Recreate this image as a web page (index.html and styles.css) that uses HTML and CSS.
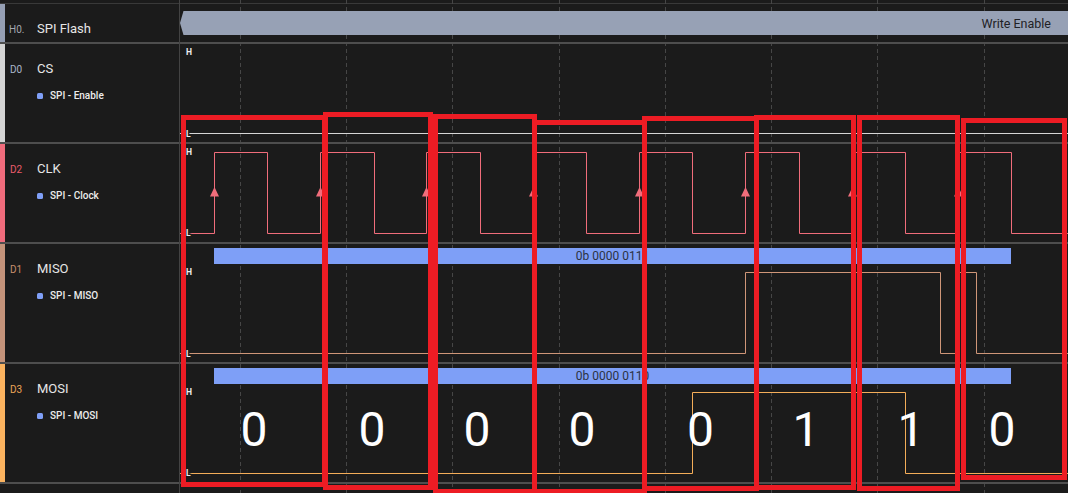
FILE: index.html
```html
<!DOCTYPE html>
<html lang="en">
<head>
<meta charset="utf-8">
<title>SPI capture</title>
<link rel="stylesheet" href="styles.css">
</head>
<body>
<div class="app">
  <aside class="labels">
    <div class="top-gap"></div>
    <div class="row row-h0">
      <span class="strip"></span>
      <div class="info">
        <div class="title"><span class="cid">H0.</span><span class="cname">SPI Flash</span></div>
      </div>
    </div>
    <div class="row row-d0">
      <span class="strip"></span>
      <div class="info">
        <div class="title"><span class="cid">D0</span><span class="cname">CS</span></div>
        <div class="sub"><span class="dot"></span><span>SPI - Enable</span></div>
      </div>
    </div>
    <div class="row row-d2">
      <span class="strip"></span>
      <div class="info">
        <div class="title"><span class="cid">D2</span><span class="cname">CLK</span></div>
        <div class="sub"><span class="dot"></span><span>SPI - Clock</span></div>
      </div>
    </div>
    <div class="row row-d1 row-tall">
      <span class="strip"></span>
      <div class="info">
        <div class="title"><span class="cid">D1</span><span class="cname">MISO</span></div>
        <div class="sub"><span class="dot"></span><span>SPI - MISO</span></div>
      </div>
    </div>
    <div class="row row-d3 row-tall">
      <span class="strip"></span>
      <div class="info">
        <div class="title"><span class="cid">D3</span><span class="cname">MOSI</span></div>
        <div class="sub"><span class="dot"></span><span>SPI - MOSI</span></div>
      </div>
    </div>
  </aside>
  <main class="canvas">
    <svg class="wave" width="888" height="493" viewBox="180 0 888 493" xmlns="http://www.w3.org/2000/svg">
      <rect class="topline" x="180" y="3" width="888" height="1"/>
      <g class="grid">
        <line x1="240.5" y1="0" x2="240.5" y2="493"/>
        <line x1="346.5" y1="0" x2="346.5" y2="493"/>
        <line x1="452.5" y1="0" x2="452.5" y2="493"/>
        <line x1="559.5" y1="0" x2="559.5" y2="493"/>
        <line x1="665.5" y1="0" x2="665.5" y2="493"/>
        <line x1="771.5" y1="0" x2="771.5" y2="493"/>
        <line x1="877.5" y1="0" x2="877.5" y2="493"/>
        <line x1="984.5" y1="0" x2="984.5" y2="493"/>
      </g>
      <g class="sep">
        <rect x="180" y="42" width="888" height="2"/>
        <rect x="180" y="142" width="888" height="2"/>
        <rect x="180" y="242" width="888" height="2"/>
        <rect x="180" y="362" width="888" height="2"/>
        <rect x="180" y="482" width="888" height="2"/>
      </g>

      <path class="hbar" d="M180 23 L183.5 11 H1068 V35 H183.5 Z"/>
      <text class="hbar-text" x="1051" y="27.5">Write Enable</text>

      <rect class="dbar" x="214" y="248" width="797" height="16"/>
      <text class="dbar-text" x="612.5" y="260">0b 0000 0111</text>
      <rect class="dbar" x="214" y="368" width="797" height="16"/>
      <text class="dbar-text" x="612.5" y="380">0b 0000 0110</text>

      <path class="sig sig-cs" d="M180 133.5 H1068"/>
      <path class="sig sig-clk" d="M180 233.5 H214.5 V152.5 H267.5 V233.5 H320.5 V152.5 H374.5 V233.5 H426.5 V152.5 H480.5 V233.5 H533.5 V152.5 H586.5 V233.5 H639.5 V152.5 H692.5 V233.5 H745.5 V152.5 H799.5 V233.5 H852.5 V152.5 H905.5 V233.5 H958.5 V152.5 H1011.5 V233.5 H1068"/>
      <g class="edge">
        <polygon points="214.5,187 210,196.5 219,196.5"/>
        <polygon points="320.5,187 316,196.5 325,196.5"/>
        <polygon points="426.5,187 422,196.5 431,196.5"/>
        <polygon points="533.5,187 529,196.5 538,196.5"/>
        <polygon points="639.5,187 635,196.5 644,196.5"/>
        <polygon points="745.5,187 741,196.5 750,196.5"/>
        <polygon points="852.5,187 848,196.5 857,196.5"/>
        <polygon points="958.5,187 954,196.5 963,196.5"/>
      </g>
      <path class="sig sig-miso" d="M180 353.5 H745.5 V272.5 H940.5 V353.5 H958.5 V272.5 H976.5 V353.5 H1068"/>
      <path class="sig sig-mosi" d="M180 473.5 H692.5 V392.5 H905.5 V473.5 H1068"/>

      <g class="lvl">
        <text x="186" y="54.7">H</text>
        <text x="186" y="136.7">L</text>
        <text x="186" y="155">H</text>
        <text x="186" y="236.3">L</text>
        <text x="186" y="275">H</text>
        <text x="186" y="356.7">L</text>
        <text x="186" y="394.7">H</text>
        <text x="186" y="476.3">L</text>
      </g>

      <g class="bit">
        <text x="254" y="446">0</text>
        <text x="372" y="446">0</text>
        <text x="477" y="446">0</text>
        <text x="582" y="446">0</text>
        <text x="700.5" y="446">0</text>
        <text x="806" y="446">1</text>
        <text x="911" y="446">1</text>
        <text x="1002" y="446">0</text>
      </g>

      <g class="mark">
        <rect x="183.5" y="117.5" width="141" height="367"/>
        <rect x="325.5" y="114.5" width="105" height="373"/>
        <rect x="435.5" y="116.5" width="99" height="375"/>
        <rect x="534.5" y="122.5" width="110" height="369"/>
        <rect x="644.5" y="118.5" width="112" height="370"/>
        <rect x="756.5" y="117.5" width="97" height="370"/>
        <rect x="859.5" y="117.5" width="98" height="371"/>
        <rect x="963.5" y="120.5" width="101" height="357"/>
      </g>
    </svg>
  </main>
</div>
</body>
</html>
```

FILE: styles.css
```css
html, body {
  margin: 0;
  padding: 0;
  background: #1b1b1b;
  overflow: hidden;
}

body {
  width: 1068px;
  height: 493px;
  font-family: Roboto, "Liberation Sans", sans-serif;
}

.app {
  display: flex;
  height: 493px;
}

.labels {
  width: 179px;
  flex: none;
  border-right: 1px solid #434343;
  display: flex;
  flex-direction: column;
}

.top-gap {
  height: 3px;
  border-bottom: 1px solid #393939;
}

.row {
  display: flex;
  height: 38px;
  border-bottom: 2px solid #4e4e4e;
}

.row-d0, .row-d2 {
  height: 98px;
}

.row-tall {
  height: 118px;
}

.strip {
  width: 5px;
  flex: none;
}

.row-h0 .strip { background: #959fb4; }
.row-d0 .strip { background: #d4d4d4; }
.row-d2 .strip { background: #f06c7c; }
.row-d1 .strip { background: #c4937a; }
.row-d3 .strip { background: #fbb35f; }

.info {
  padding: 17px 0 0 5px;
  display: flex;
  flex-direction: column;
}

.title {
  display: flex;
  align-items: baseline;
  line-height: 16px;
}

.cid {
  width: 27px;
  font-size: 10px;
  color: #aab6c9;
}

.row-h0 .cid { color: #a2a6ae; width: 28px; margin-left: -1px; }
.row-d2 .cid { color: #ea5c6c; }
.row-d1 .cid { color: #c98f6d; }
.row-d3 .cid { color: #eba557; }

.cname {
  font-size: 13px;
  color: #e6e6e6;
}

.sub {
  display: flex;
  align-items: center;
  gap: 7px;
  margin: 12px 0 0 27px;
  font-size: 10px;
  line-height: 12px;
  font-weight: 500;
  color: #ececec;
}

.dot {
  width: 6px;
  height: 6px;
  border-radius: 1.5px;
  background: #7f9ff7;
}

.canvas {
  flex: 1;
}

.wave {
  display: block;
}

.topline { fill: #393939; }

.grid line {
  stroke: #464646;
  stroke-width: 1;
  stroke-dasharray: 4 3;
}

.sep rect { fill: #4e4e4e; }

.hbar { fill: #97a1b5; }

.hbar-text {
  font-size: 12.5px;
  fill: #1f2126;
  text-anchor: end;
}

.dbar { fill: #7e9ff7; }

.dbar-text {
  font-size: 12px;
  fill: #2b3245;
  text-anchor: middle;
}

.sig {
  fill: none;
  stroke-width: 1;
}

.sig-cs { stroke: #d6d6d6; }
.sig-clk { stroke: #f06d7b; }
.sig-miso { stroke: #cf9678; }
.sig-mosi { stroke: #f4ad59; }

.edge polygon { fill: #f06d7b; }

.lvl text {
  font-size: 8.5px;
  font-weight: 700;
  fill: #ececec;
  stroke: #1b1b1b;
  stroke-width: 3px;
  stroke-linejoin: round;
  paint-order: stroke;
}

.bit text {
  font-size: 48px;
  font-weight: 400;
  fill: #ffffff;
  text-anchor: middle;
}

.mark rect {
  fill: none;
  stroke: #ed1c24;
  stroke-width: 5;
}
```
